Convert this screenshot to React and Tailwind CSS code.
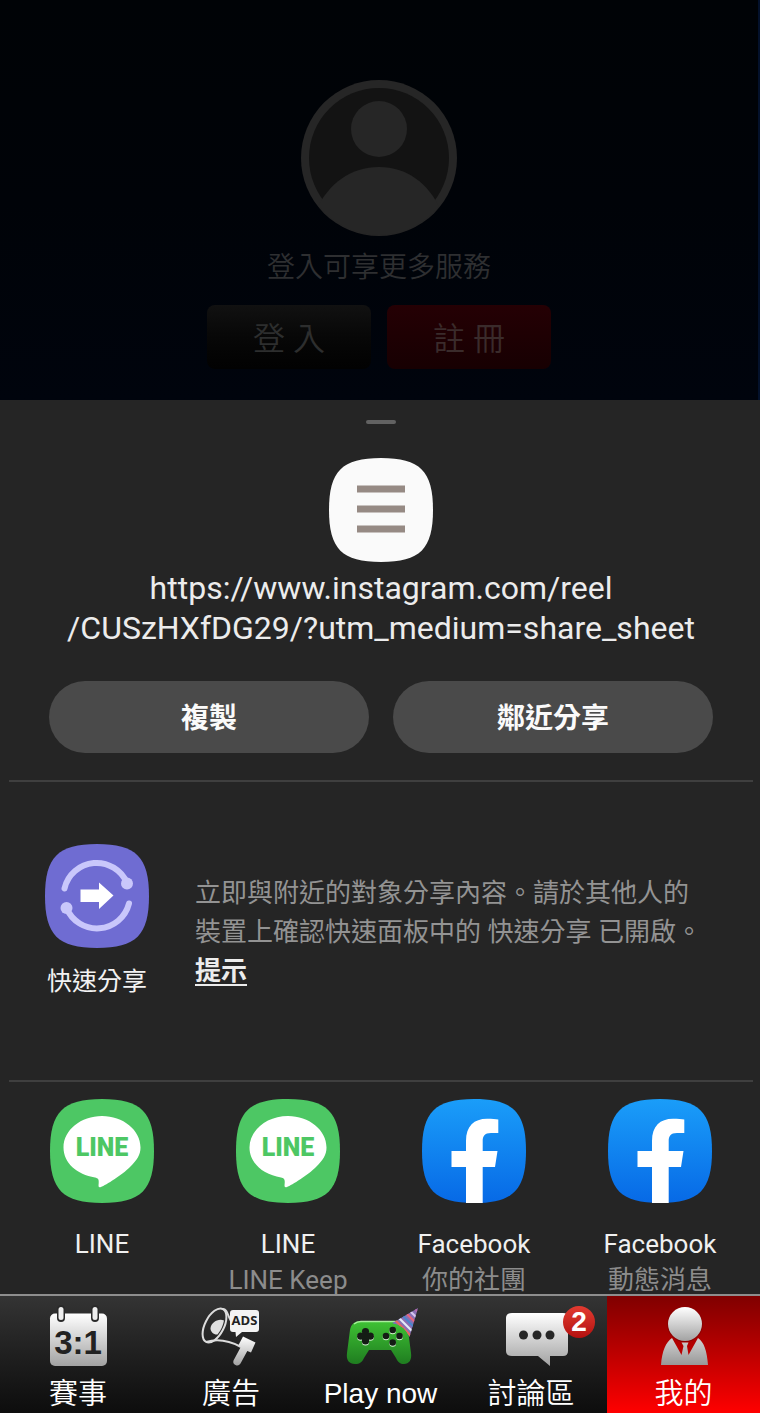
import React from "react";

const SQUIRCLE = "M52 0C91 0 104 13 104 52S91 104 52 104 0 91 0 52 13 0 52 0Z";

function AvatarIcon() {
  return (
    <svg viewBox="0 0 156 156" className="size-39" aria-hidden="true">
      <defs>
        <clipPath id="avatar-clip">
          <circle cx="78" cy="78" r="77" />
        </clipPath>
      </defs>
      <circle cx="78" cy="78" r="78" fill="#262626" />
      <circle cx="78" cy="78" r="70" fill="#131313" />
      <circle cx="78" cy="49" r="28" fill="#262626" />
      <path
        d="M15 130C28 103 50 87 78 87S127 103 140 130L130 156H26Z"
        fill="#262626"
        clipPath="url(#avatar-clip)"
      />
    </svg>
  );
}

function MenuIcon() {
  return (
    <svg viewBox="0 0 104 104" className="size-26" aria-hidden="true">
      <path d={SQUIRCLE} fill="#fafafa" />
      <path d="M28 27.500h48v7H28zM28 47.500h48v7H28zM28 67.500h48v7H28z" fill="#968a84" />
    </svg>
  );
}

function QuickShareIcon() {
  return (
    <svg viewBox="0 0 104 104" className="size-26" aria-hidden="true">
      <path d={SQUIRCLE} fill="#6f6cd2" />
      <g fill="none" stroke="#c9c7fb" strokeWidth="6" strokeLinecap="round">
        <path d="M19.500 44.500A33 33 0 0 1 82 39" />
        <path d="M84 59.500A33 33 0 0 1 21.500 64" />
      </g>
      <circle cx="82" cy="39.500" r="6" fill="#c9c7fb" />
      <circle cx="21.500" cy="64" r="6" fill="#c9c7fb" />
      <path d="M35.500 45.500H54V38.500L68.500 51.500 54 65V58H35.500Z" fill="#fff" />
    </svg>
  );
}

function LineIcon() {
  return (
    <svg viewBox="0 0 104 104" className="size-26" aria-hidden="true">
      <path d={SQUIRCLE} fill="#4dc764" />
      <path
        d="M52 17C31 17 13.500 31 13.500 48.500 13.500 64 27 75.500 45 78.500 48 79.300 49 80 48.700 84 48.500 87 48 89 51 88 56 86 72 76 80 68 87 61 90.500 56 90.500 48.500 90.500 31 73 17 52 17Z"
        fill="#fff"
      />
      <text
        x="52"
        y="57"
        textAnchor="middle"
        className="fill-[#4dc764] font-[Roboto,sans-serif] text-[25px] font-black"
      >
        LINE
      </text>
    </svg>
  );
}

function FacebookIcon() {
  return (
    <svg viewBox="0 0 104 104" className="size-26" aria-hidden="true">
      <defs>
        <linearGradient id="fb-blue" x1="0" y1="0" x2="0" y2="1">
          <stop offset="0" stopColor="#1a9df9" />
          <stop offset="1" stopColor="#0769e6" />
        </linearGradient>
      </defs>
      <path d={SQUIRCLE} fill="url(#fb-blue)" />
      <path
        d="M44 104V68H29.500V52H44V42C44 27 52 19.700 65 19.700 70 19.700 74 20.200 76.300 20.500V34H69C62.500 34 60.700 37.500 60.700 42V52H75.500L73 68H60.700V104Z"
        fill="#fff"
      />
    </svg>
  );
}

function SilverGradient({ id }) {
  return (
    <linearGradient id={id} x1="0" y1="0" x2="0" y2="1">
      <stop offset="0" stopColor="#ffffff" />
      <stop offset="1" stopColor="#a2a2a2" />
    </linearGradient>
  );
}

function MatchIcon() {
  return (
    <svg viewBox="0 0 64 64" className="size-16" aria-hidden="true">
      <defs>
        <SilverGradient id="cal" />
      </defs>
      <rect x="4" y="9.500" width="57" height="52.500" rx="5" fill="url(#cal)" />
      <rect x="11" y="1" width="8" height="17" rx="4" fill="#2a2a2a" />
      <rect x="45" y="1" width="8" height="17" rx="4" fill="#2a2a2a" />
      <rect x="12.500" y="3" width="5" height="13" rx="2.500" fill="#eee" />
      <rect x="46.500" y="3" width="5" height="13" rx="2.500" fill="#eee" />
      <text
        x="32"
        y="50"
        textAnchor="middle"
        className="fill-[#222] font-['Liberation_Sans',sans-serif] text-[33px] font-bold"
      >
        3:1
      </text>
    </svg>
  );
}

function AdsIcon() {
  return (
    <svg viewBox="0 0 64 64" className="size-16" aria-hidden="true">
      <defs>
        <SilverGradient id="ads" />
      </defs>
      <ellipse
        cx="15.500"
        cy="21.500"
        rx="9.500"
        ry="18.500"
        transform="rotate(27 15.500 21.500)"
        fill="none"
        stroke="#dcdcdc"
        strokeWidth="2"
      />
      <path d="M25 16.500C19 14 11.500 19 11.500 24.500 11.500 28 15 31 18.500 30.500Q23.500 24.500 25 16.500Z" fill="#e0e0e0" />
      <path d="M24 5C28 5 28 10 32 17M7 38C17 35 29 36 42 43" fill="none" stroke="#dcdcdc" strokeWidth="2" />
      <path
        d="M34 6H57Q60 6 60 9V25Q60 28 57 28H43L37 33 36.500 28H34Q31 28 31 25V9Q31 6 34 6Z"
        fill="#f3f3f3"
      />
      <path
        d="M44 32.500L56.500 38.500 52 48.500 48.300 47 41.500 59.500Q39.500 62.500 36.500 61 33.500 59.500 34.500 56.500L41.500 43.500 39.500 41Z"
        fill="url(#ads)"
      />
      <text
        x="45.500"
        y="21"
        textAnchor="middle"
        className="fill-[#222] font-['Open_Sans',sans-serif] text-[13px] font-bold"
      >
        ADS
      </text>
    </svg>
  );
}

function GameIcon() {
  return (
    <svg viewBox="-8 0 80 64" className="h-16 w-20" aria-hidden="true">
      <defs>
        <linearGradient id="pad" x1="0" y1="0" x2="0" y2="1">
          <stop offset="0" stopColor="#3fc234" />
          <stop offset="1" stopColor="#1f7d20" />
        </linearGradient>
        <clipPath id="hat">
          <path d="M69 4L43.500 19Q55 21 60.500 33Z" />
        </clipPath>
      </defs>
      <path
        d="M12 17H50C56 17 58 20 59 26L62 49C63 56 60 60 55 60 51 60 49 58 47 54L42 46H20L15 54C13 58 11 60 6 60 0 60-3 56-2 49L1 26C2 20 6 17 12 17Z"
        fill="url(#pad)"
      />
      <path d="M5 20Q8 17.500 12 17.500H48" fill="none" stroke="#a9ee9d" strokeWidth="1.500" />
      <g fill="#d9f5d5">
        <circle cx="16.500" cy="28.500" r="3.600" />
        <circle cx="16.500" cy="38" r="3.600" />
        <circle cx="11.700" cy="33.200" r="3.600" />
        <circle cx="21.300" cy="33.200" r="3.600" />
        <circle cx="43.700" cy="27" r="3.300" />
        <circle cx="37" cy="33" r="3.300" />
        <circle cx="50.500" cy="33" r="3.300" />
        <circle cx="43.700" cy="39.500" r="3.300" />
      </g>
      <g fill="#141c14">
        <circle cx="16.500" cy="27.500" r="3.600" />
        <circle cx="16.500" cy="37" r="3.600" />
        <circle cx="11.700" cy="32.200" r="3.600" />
        <circle cx="21.300" cy="32.200" r="3.600" />
        <rect x="13" y="29" width="7" height="7" />
        <circle cx="43.700" cy="26" r="3.300" />
        <circle cx="37" cy="32" r="3.300" />
        <circle cx="50.500" cy="32" r="3.300" />
        <circle cx="43.700" cy="38.500" r="3.300" />
      </g>
      <g clipPath="url(#hat)">
        <rect x="42" y="3" width="29" height="31" fill="#8a6fb4" />
        <g strokeWidth="2.200" fill="none">
          <path d="M41 16L60 35" stroke="#6b78c4" />
          <path d="M44 14L64 34" stroke="#e8675f" />
          <path d="M48 12L68 32" stroke="#e3ebf7" />
          <path d="M52 10L70 28" stroke="#4a86cc" />
          <path d="M56 8L72 24" stroke="#e8657a" />
          <path d="M60 6L74 20" stroke="#d5c7ee" />
          <path d="M64 3L76 15" stroke="#b868ad" />
        </g>
      </g>
    </svg>
  );
}

function ForumIcon() {
  return (
    <span className="relative block">
      <svg viewBox="-2 0 64 64" className="size-16 overflow-visible" aria-hidden="true">
        <defs>
          <SilverGradient id="forum" />
        </defs>
        <path
          d="M11 9H62Q67 9 67 14V47Q67 52 62 52H49V62L37 52H11Q5 52 5 47V14Q5 9 11 9Z"
          fill="url(#forum)"
        />
        <circle cx="22.500" cy="31" r="4.500" fill="#272727" />
        <circle cx="36" cy="31" r="4.500" fill="#272727" />
        <circle cx="49" cy="31" r="4.500" fill="#272727" />
      </svg>
      <span className="absolute top-0.5 -right-8 flex size-8 items-center justify-center rounded-full bg-linear-to-b from-[#e23a30] to-[#b40f0f] font-['Liberation_Sans',sans-serif] text-[28px] leading-8 font-bold text-white">
        2
      </span>
    </span>
  );
}

function MineIcon() {
  return (
    <svg viewBox="0 0 64 64" className="size-16" aria-hidden="true">
      <defs>
        <SilverGradient id="mine-head" />
        <linearGradient id="mine-body" x1="0" y1="0" x2="0" y2="1">
          <stop offset="0" stopColor="#d2d2d2" />
          <stop offset="1" stopColor="#989898" />
        </linearGradient>
      </defs>
      <path
        d="M20 34L29.500 51 31.500 42 29.500 38.500H36.500L35 42 36.500 51 46 34C52 38 55 47 56 61H9C10 47 14 38 20 34Z"
        fill="url(#mine-body)"
      />
      <circle cx="33" cy="20" r="18" fill="#8d0000" />
      <circle cx="33" cy="20" r="17" fill="url(#mine-head)" />
    </svg>
  );
}

const apps = [
  { name: "LINE", Icon: LineIcon },
  { name: "LINE", detail: "LINE Keep", Icon: LineIcon },
  { name: "Facebook", detail: "你的社團", Icon: FacebookIcon },
  { name: "Facebook", detail: "動態消息", Icon: FacebookIcon },
];

const tabs = [
  { label: "賽事", Icon: MatchIcon },
  { label: "廣告", Icon: AdsIcon },
  { label: "Play now", Icon: GameIcon, latin: true },
  { label: "討論區", Icon: ForumIcon },
  { label: "我的", Icon: MineIcon, active: true },
];

function LoginHeader() {
  return (
    <header className="flex flex-col items-center border-r-2 border-[#03112b] bg-linear-to-b from-[#000306] via-[#000308] to-[#00040d] pt-20 pb-[31px]">
      <AvatarIcon />
      <p className="mt-3 text-[28px] leading-10 font-[350] text-[#2e2f31]">登入可享更多服務</p>
      <div className="mt-[17px] flex gap-4">
        <button
          type="button"
          className="h-16 w-41 rounded-lg bg-linear-to-b from-[#111111] to-[#020202] pt-1 text-[32px] font-[350] text-[#2d2e2e]"
        >
          登 入
        </button>
        <button
          type="button"
          className="h-16 w-41 rounded-lg bg-linear-to-b from-[#250004] to-[#170002] pt-1 text-[32px] font-[350] text-[#3a2b2b]"
        >
          註 冊
        </button>
      </div>
    </header>
  );
}

function ShareSheet() {
  return (
    <main className="flex flex-1 flex-col bg-[#252525] pt-5 pr-[7px] pl-[9px]">
      <div className="flex flex-col items-center">
        <div className="h-1 w-[30px] rounded-xs bg-[#626262]" />
        <div className="mt-[34px]">
          <MenuIcon />
        </div>
        <p className="mt-1.5 text-center text-[32px] leading-10 text-[#ececec]">
          https://www.instagram.com/reel
          <br />
          /CUSzHXfDG29/?utm_medium=share_sheet
        </p>
      </div>

      <div className="mt-[33px] grid grid-cols-2 gap-6 px-10 text-[28px] font-bold text-[#fafafa]">
        <button type="button" className="h-18 rounded-full bg-[#4a4a4a] pt-1">
          複製
        </button>
        <button type="button" className="h-18 rounded-full bg-[#4a4a4a] pt-1">
          鄰近分享
        </button>
      </div>

      <section className="mt-[27px] flex gap-[42px] border-y-2 border-[#3f3f3f] pt-[62px] pb-20">
        <button type="button" className="ml-8 flex w-28 shrink-0 flex-col items-center">
          <QuickShareIcon />
          <span className="mt-4 text-[25px] leading-9 text-[#f2f2f2]">快速分享</span>
        </button>
        <div className="pt-[30px] text-[26px] leading-[39px] text-[#939393]">
          <p>
            立即與附近的對象分享內容。請於其他人的
            <br />
            裝置上確認快速面板中的 快速分享 已開啟。
          </p>
          <a href="#tips" className="font-bold text-[#ececec] underline decoration-2 underline-offset-4">
            提示
          </a>
        </div>
      </section>

      <section className="grid grid-cols-4 pt-[17px]">
        {apps.map(({ name, detail, Icon }, i) => (
          <button key={i} type="button" className="flex flex-col items-center text-[26px]">
            <Icon />
            <span className="mt-[23px] leading-9 text-[#f0f0f0]">{name}</span>
            {detail && <span className="pt-1 leading-7 text-[#8c8c8c]">{detail}</span>}
          </button>
        ))}
      </section>
    </main>
  );
}

function TabBar() {
  return (
    <nav className="grid grid-cols-[156fr_150fr_149fr_152fr_153fr] border-t-2 border-[#8e8e8e] bg-linear-to-b from-[#343434] to-[#0d0d0d]">
      {tabs.map(({ label, Icon, active, latin }) => (
        <a
          key={label}
          href="#tab"
          aria-current={active ? "page" : undefined}
          className={
            "flex flex-col items-center gap-2 pt-2 pb-px text-white " +
            (active ? "bg-linear-to-b from-[#800000] to-[#ff0000]" : "")
          }
        >
          <Icon />
          <span
            className={
              latin
                ? "font-['Liberation_Sans',sans-serif] text-[28px] leading-9 whitespace-nowrap"
                : "text-[29px] leading-9 font-[350] whitespace-nowrap"
            }
          >
            {label}
          </span>
        </a>
      ))}
    </nav>
  );
}

export default function App() {
  return (
    <div
      lang="zh-Hant"
      className="flex min-h-screen flex-col bg-[#252525] font-[Roboto,'Noto_Sans_CJK_TC',sans-serif]"
    >
      <LoginHeader />
      <ShareSheet />
      <TabBar />
    </div>
  );
}
